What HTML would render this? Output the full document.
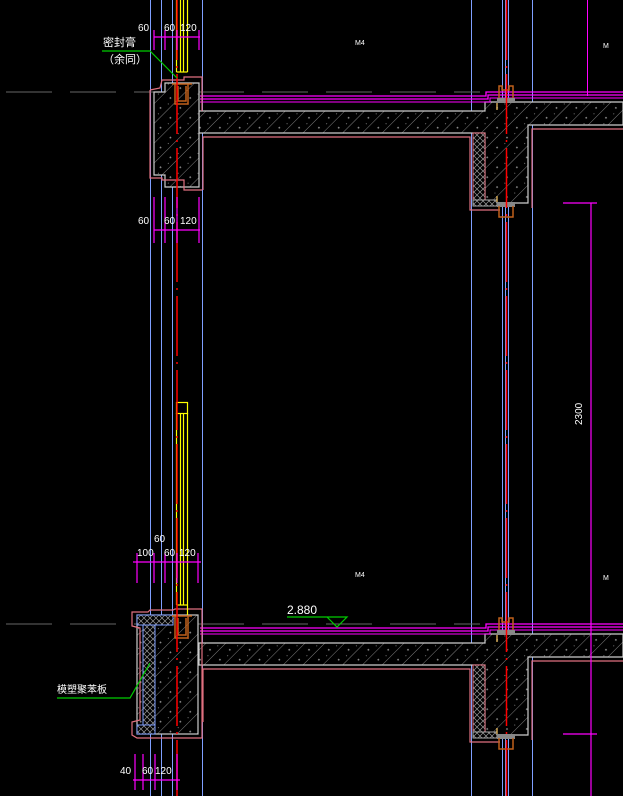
<!DOCTYPE html>
<html><head><meta charset="utf-8"><style>
html,body{margin:0;padding:0;background:#000;}
svg{display:block}
text{font-family:"Liberation Sans","Noto Sans CJK SC",sans-serif;fill:#fff;}
</style></head><body>
<svg width="623" height="796" viewBox="0 0 623 796" xmlns="http://www.w3.org/2000/svg">
<defs>
<pattern id="h" width="14" height="14" patternUnits="userSpaceOnUse" patternTransform="rotate(45)">
<rect width="14" height="14" fill="#000"/>
<line x1="0" y1="0" x2="0" y2="14" stroke="#a0a0a0" stroke-width="0.8"/>
<rect x="7" y="4" width="1.6" height="1.6" fill="#888"/>
<rect x="10" y="10" width="1" height="1" fill="#777"/>
</pattern>
<pattern id="x" width="6" height="6" patternUnits="userSpaceOnUse">
<rect width="6" height="6" fill="#000"/>
<path d="M0,0L6,6M6,0L0,6" stroke="#999" stroke-width="0.7"/>
</pattern>
<g id="fl">
<path d="M199,111 L485,111 L485,102 L623,102 L623,125 L528,125 L528,203 L485,203 L485,133 L199,133 Z" fill="url(#h)" stroke="#ccc" stroke-width="1.2"/>
<rect x="473" y="133" width="12" height="67" fill="url(#x)" stroke="#e07080"/>
<rect x="473" y="200" width="24" height="6" fill="url(#x)" stroke="#aaa"/>
<path d="M203,190 L203,137 L470,137 L470,210 L500,210" fill="none" stroke="#e07080" stroke-width="1.2"/>
<path d="M532,208 L532,129 L623,129" fill="none" stroke="#e07080" stroke-width="1.2"/>
<path d="M200,96 L486,96 L486,92 L623,92" fill="none" stroke="#f0f" stroke-width="1.3"/>
<path d="M200,99 L488,99 L488,95 L623,95" fill="none" stroke="#f0f" stroke-width="1.3"/>
<path d="M200,102 L490,102 L490,98 L623,98" fill="none" stroke="#f0f" stroke-width="1"/>
<path d="M499,99 L499,86 L502,86 L502,90 L509,90 L509,86 L513,86 L513,99 Z" fill="none" stroke="#c0601a" stroke-width="1.5"/>
<rect x="497" y="98" width="18" height="5" fill="#888"/>
<rect x="497" y="202" width="18" height="5" fill="#888"/>
<path d="M499,206 L499,217 L513,217 L513,206" fill="none" stroke="#c0601a" stroke-width="1.5"/>
<line x1="497" y1="103" x2="497" y2="110" stroke="#fc6" stroke-width="1.2"/>
<line x1="497" y1="196" x2="497" y2="202" stroke="#fc6" stroke-width="1.2"/>
<line x1="0" y1="92" x2="480" y2="92" stroke="#666" stroke-width="1" stroke-dasharray="46 18" stroke-dashoffset="-6"/>
</g>
</defs>
<rect width="623" height="796" fill="#000"/>
<g stroke="#7f9fff" stroke-width="1">
<line x1="150.5" y1="0" x2="150.5" y2="796"/>
<line x1="161.5" y1="0" x2="161.5" y2="796"/>
<line x1="172.5" y1="0" x2="172.5" y2="796"/>
<line x1="202.5" y1="0" x2="202.5" y2="796"/>
<line x1="471.5" y1="0" x2="471.5" y2="796"/>
<line x1="502.5" y1="0" x2="502.5" y2="796"/>
<line x1="505.5" y1="0" x2="505.5" y2="796"/>
<line x1="508.5" y1="0" x2="508.5" y2="796"/>
<line x1="532.5" y1="0" x2="532.5" y2="796"/>
</g>
<line x1="587.5" y1="0" x2="587.5" y2="96" stroke="#f0f"/>
<use href="#fl"/>
<use href="#fl" transform="translate(0,532)"/>
<path d="M154,92 L165,92 L165,83 L199,83 L199,133 L199,187 L165,187 L165,175 L154,175 Z" fill="url(#h)" stroke="#ccc" stroke-width="1.2"/>
<path d="M150,90 L150,178 L162,178 L162,180 L184,180 L184,190 L202,190" fill="none" stroke="#e07080" stroke-width="1.2"/>
<path d="M150,90 L160,88 L162,80 L184,80 L184,77 L202,77 L202,111" fill="none" stroke="#e07080" stroke-width="1.2"/>
<rect x="137" y="615" width="61" height="119" fill="url(#h)" stroke="#ccc" stroke-width="1.2"/>
<rect x="137" y="615" width="36" height="10" fill="url(#x)" stroke="#7f9fff"/>
<rect x="143" y="625" width="12" height="100" fill="url(#x)" stroke="#7f9fff"/>
<rect x="137" y="725" width="18" height="9" fill="url(#x)" stroke="#7f9fff"/>
<path d="M202,643 L202,738 L137,738 L132,735 L132,722 L140,720 L140,628 L132,626 L132,612 L148,612 L150,610 L173,610 L175,609 L202,609 L202,643" fill="none" stroke="#e07080" stroke-width="1.2"/>
<g stroke="#ff0" stroke-width="1.2" fill="none">
<line x1="176.5" y1="0" x2="176.5" y2="72"/><line x1="180.5" y1="0" x2="180.5" y2="72"/>
<line x1="183.5" y1="0" x2="183.5" y2="72"/><line x1="187.5" y1="0" x2="187.5" y2="72"/>
<line x1="176.5" y1="72" x2="187.5" y2="72"/>
<rect x="176.5" y="402.5" width="11" height="11"/>
<line x1="180.5" y1="413" x2="180.5" y2="605"/><line x1="183.5" y1="413" x2="183.5" y2="605"/>
<line x1="176.5" y1="413" x2="176.5" y2="605"/><line x1="187.5" y1="413" x2="187.5" y2="615"/>
<line x1="176.5" y1="605" x2="187.5" y2="605"/>
</g>
<g fill="none" stroke="#c0601a" stroke-width="1.5">
<path d="M172,84 L192,84 M175,84 L175,104 L188,104 L188,84 M178,86 L178,101 L186,101 L186,86"/>
<path d="M172,616 L192,616 M175,616 L175,638 L188,638 L188,616 M178,618 L178,635 L186,635 L186,618"/>
</g>
<g stroke="#f00" stroke-width="1.5">
<line x1="177" y1="0" x2="177" y2="796" stroke-dasharray="60 6 2 6"/>
<line x1="506.5" y1="0" x2="506.5" y2="796" stroke-dasharray="60 6 2 6"/>
</g>
<g stroke="#f0f" stroke-width="1.2">
<line x1="154" y1="37" x2="200" y2="37"/>
<line x1="154" y1="30" x2="154" y2="50"/><line x1="165" y1="30" x2="165" y2="50"/><line x1="177" y1="30" x2="177" y2="50"/><line x1="199" y1="30" x2="199" y2="50"/>
<line x1="154" y1="230" x2="200" y2="230"/>
<line x1="154" y1="197" x2="154" y2="243"/><line x1="165" y1="197" x2="165" y2="243"/><line x1="177" y1="197" x2="177" y2="243"/><line x1="199" y1="197" x2="199" y2="243"/>
<line x1="133" y1="562" x2="201" y2="562"/>
<line x1="137" y1="553" x2="137" y2="583"/><line x1="154" y1="553" x2="154" y2="583"/><line x1="165" y1="553" x2="165" y2="583"/><line x1="177" y1="553" x2="177" y2="583"/><line x1="198" y1="553" x2="198" y2="583"/>
<line x1="133" y1="780" x2="180" y2="780"/>
<line x1="135" y1="754" x2="135" y2="790"/><line x1="143" y1="754" x2="143" y2="790"/><line x1="155" y1="754" x2="155" y2="790"/><line x1="177" y1="754" x2="177" y2="790"/>
<line x1="591" y1="203" x2="591" y2="796"/>
<line x1="563" y1="203" x2="597" y2="203"/><line x1="563" y1="734" x2="597" y2="734"/>
</g>
<g font-size="10">
<text x="138" y="31">60</text><text x="164" y="31">60</text><text x="180" y="31">120</text>
<text x="138" y="224">60</text><text x="164" y="224">60</text><text x="180" y="224">120</text>
<text x="137" y="556">100</text><text x="154" y="542">60</text><text x="164" y="556">60</text><text x="179" y="556">120</text>
<text x="120" y="774">40</text><text x="142" y="774">60</text><text x="155" y="774">120</text>
<text transform="translate(582,425) rotate(-90)">2300</text>
<text x="287" y="614" font-size="12">2.880</text>
</g>
<g font-size="7"><text x="355" y="45">M4</text><text x="355" y="577">M4</text><text x="603" y="48">M</text><text x="603" y="580">M</text></g>
<g stroke="#0c0" stroke-width="1.2" fill="none">
<path d="M102,51 L150,51 L177,78"/>
<path d="M287,617 L347,617 L337,627 L327,617"/>
<path d="M57,698 L130,698 L150,663"/>
</g>
<text x="103" y="46" font-size="11">密封膏</text>
<text x="103" y="63" font-size="11">（余同）</text>
<text x="57" y="693" font-size="10">模塑聚苯板</text>
</svg>
</body></html>
